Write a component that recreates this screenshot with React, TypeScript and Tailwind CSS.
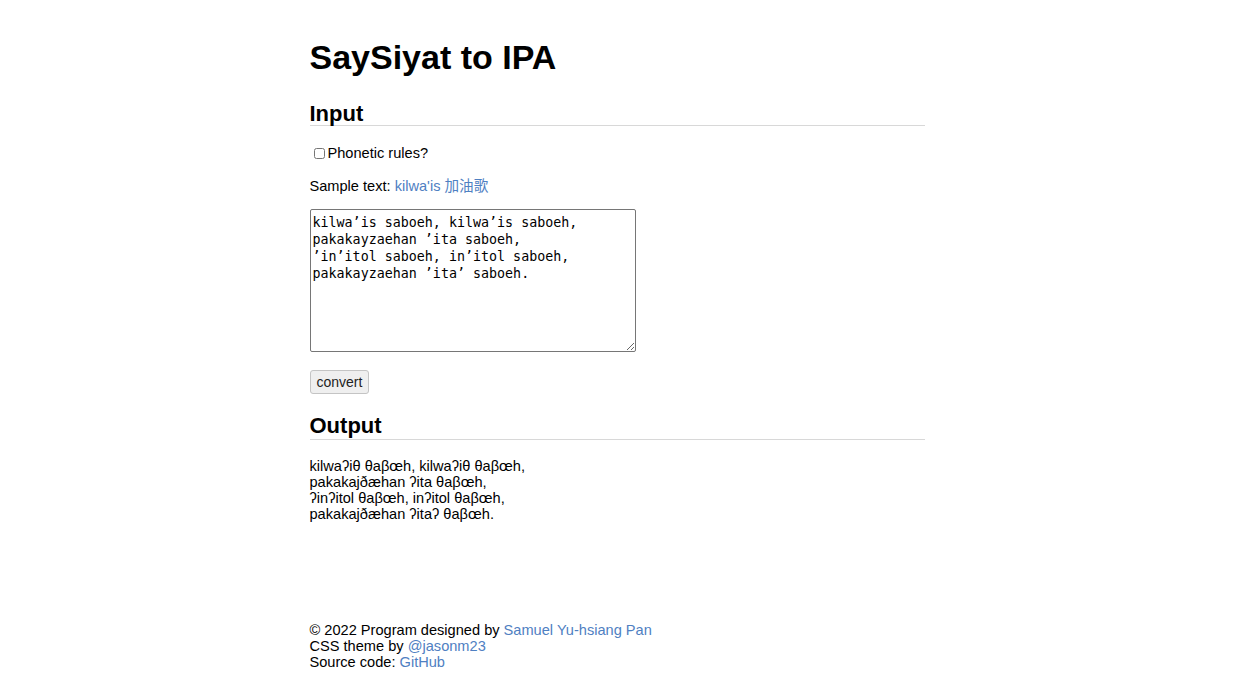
import { useState } from 'react';

const sample =
  "kilwa’is saboeh, kilwa’is saboeh,\npakakayzaehan ’ita saboeh,\n’in’itol saboeh, in’itol saboeh,\npakakayzaehan ’ita’ saboeh.";

const output = [
  'kilwaʔiθ θaβœh, kilwaʔiθ θaβœh,',
  'pakakajðæhan ʔita θaβœh,',
  'ʔinʔitol θaβœh, inʔitol θaβœh,',
  'pakakajðæhan ʔitaʔ θaβœh.',
];

export default function App() {
  const [text, setText] = useState(sample);
  const [phonetic, setPhonetic] = useState(false);

  return (
    <div className="min-h-screen bg-white text-black font-['Liberation_Sans','Noto_Sans_CJK_TC',Arial,sans-serif] text-[14.6px] leading-[16px]">
      <div className="mx-auto w-[615px] pt-[37px] pb-2">
        <h1 className="text-[34px] leading-[40px] font-bold">SaySiyat to IPA</h1>

        {/* section header */}
        <h2 className="mt-[26px] text-[22px] leading-[22px] font-bold border-b border-[#d8d8d8]">Input</h2>

        <label className="mt-[19px] flex items-center pl-[4px]">
          <input
            type="checkbox"
            checked={phonetic}
            onChange={(e) => setPhonetic(e.target.checked)}
            className="w-[11px] h-[11px] mr-[3px] m-0"
          />
          Phonetic rules?
        </label>

        <p className="mt-[17px]">
          Sample text:{' '}
          <a href="#" className="text-[#4f80c2]">kilwa'is 加油歌</a>
        </p>

        <textarea
          value={text}
          onChange={(e) => setText(e.target.value)}
          className="mt-[15px] block w-[326px] h-[143px] border border-[#767676] rounded-[2px] px-[2px] pt-[4px] pb-[1px] font-['DejaVu_Sans_Mono',monospace] text-[13.33px] leading-[17px] resize"
        />

        <button className="mt-[18px] block h-[24px] px-[6px] border border-[#c4c4c4] rounded-[3px] bg-[#efefef] text-[14px] leading-[16px] text-[#222]">
          convert
        </button>

        <h2 className="mt-[21px] text-[22px] leading-[22px] font-bold border-b border-[#d8d8d8] pb-[2px]">Output</h2>

        <div className="mt-[18px]">
          {output.map((l, i) => (
            <div key={i}>{l}</div>
          ))}
        </div>

        <footer className="mt-[100px]">
          <div>
            © 2022 Program designed by <a href="#" className="text-[#4f80c2]">Samuel Yu-hsiang Pan</a>
          </div>
          <div>
            CSS theme by <a href="#" className="text-[#4f80c2]">@jasonm23</a>
          </div>
          <div>
            Source code: <a href="#" className="text-[#4f80c2]">GitHub</a>
          </div>
        </footer>
      </div>
    </div>
  );
}
